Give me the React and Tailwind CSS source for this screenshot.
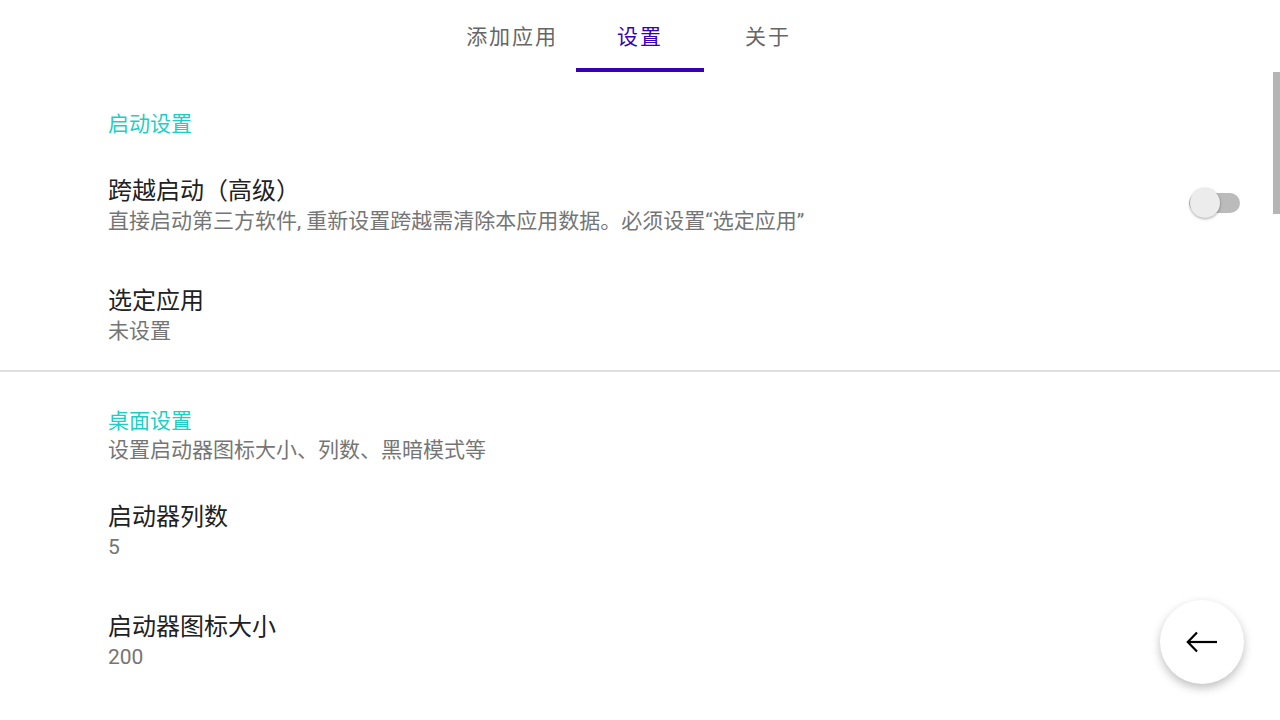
import { useState } from "react";

const font = { fontFamily: 'Roboto, "Noto Sans CJK SC", sans-serif' };

function Tabs() {
  const tabs = ["添加应用", "设置", "关于"];
  const active = 1;
  return (
    <div className="flex h-[72px] justify-center bg-white">
      {tabs.map((t, i) => (
        <div key={t} className="relative flex w-[128px] items-center justify-center pt-[4px]">
          <span
            className={`text-[21px] tracking-[1.9px] ${
              i === active ? "text-[#3700b3]" : "text-[#666666]"
            }`}
          >
            {t}
          </span>
          {i === active && (
            <div className="absolute bottom-0 left-0 h-[4px] w-full bg-[#3700b3]" />
          )}
        </div>
      ))}
    </div>
  );
}

function Switch({ on, onChange }) {
  return (
    <button
      onClick={() => onChange(!on)}
      className="relative mb-[10px] h-[30px] w-[51px] shrink-0"
    >
      <div className="absolute left-0 top-[5px] h-[20px] w-[51px] rounded-full bg-[#bbbbbb]" />
      <div
        className={`absolute top-0 h-[30px] w-[30px] rounded-full bg-[#ececec] shadow-[0_1px_3px_rgba(0,0,0,0.35)] ${
          on ? "left-[21px]" : "left-[1px]"
        }`}
      />
    </button>
  );
}

function Row({ title, summary, right, h = "h-[108px]", textClass = "" }) {
  return (
    <div className={`flex ${h} items-center pr-[40px]`}>
      <div className={`flex-1 ${textClass}`}>
        <div className="text-[24px] leading-[30px] text-[#212121]">{title}</div>
        <div className="text-[21px] leading-[31px] text-[#757575]">{summary}</div>
      </div>
      {right}
    </div>
  );
}

export default function App() {
  const [cross, setCross] = useState(false);

  return (
    <div className="relative h-[720px] w-[1280px] overflow-hidden bg-white" style={font}>
      <Tabs />

      <div className="pl-[108px]">
        {/* 启动设置 */}
        <div className="h-[82px] pt-[38px]">
          <div className="text-[21px] leading-[28px] text-[#1ccfc4]">启动设置</div>
        </div>
        <Row
          title="跨越启动（高级）"
          summary="直接启动第三方软件, 重新设置跨越需清除本应用数据。必须设置“选定应用”"
          textClass="-mt-[4px]"
          right={<Switch on={cross} onChange={setCross} />}
        />
        <Row title="选定应用" summary="未设置" />
      </div>

      <div className="h-[2px] w-full bg-[#e0e0e0]" />

      <div className="pl-[108px]">
        {/* 桌面设置 */}
        <div className="pt-[35px] pb-[13px]">
          <div className="text-[21px] leading-[28px] text-[#1ccfc4]">桌面设置</div>
          <div className="text-[21px] leading-[30px] text-[#757575]">
            设置启动器图标大小、列数、黑暗模式等
          </div>
        </div>
        <Row title="启动器列数" summary="5" h="h-[110px]" textClass="-mt-[2px]" />
        <Row title="启动器图标大小" summary="200" h="h-[110px]" textClass="-mt-[2px]" />
      </div>

      {/* scrollbar */}
      <div className="absolute right-0 top-[72px] h-[142px] w-[7px] bg-[#b5b5b5]" />

      {/* fab */}
      <button className="absolute bottom-[36px] right-[36px] flex h-[84px] w-[84px] items-center justify-center rounded-full bg-white shadow-[0_4px_10px_rgba(0,0,0,0.25)]">
        <svg width="32" height="22" viewBox="0 0 32 22" fill="none" stroke="#000" strokeWidth="2.2">
          <path d="M31 11H2" />
          <path d="M11 1.5L1.8 11L11 20.5" />
        </svg>
      </button>
    </div>
  );
}
